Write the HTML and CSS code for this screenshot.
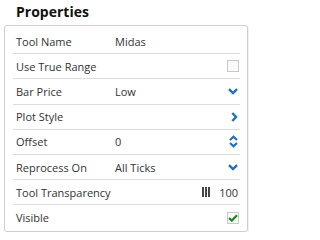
FILE: index.html
```html
<!DOCTYPE html>
<html>
<head>
<meta charset="utf-8">
<link rel="stylesheet" href="styles.css">
</head>
<body>
<h1 class="title">Properties</h1>
<div class="panel">
  <div class="row"><span class="label">Tool Name</span><span class="value">Midas</span><span class="ctl"></span></div>
  <div class="row"><span class="label">Use True Range</span><span class="value"></span><span class="ctl"><span class="check"></span></span></div>
  <div class="row"><span class="label">Bar Price</span><span class="value">Low</span><span class="ctl">
    <svg class="icon" width="10" height="7" viewBox="0 0 10 7"><path d="M1 1.2 L5 5 L9 1.2" fill="none" stroke="#1f6fbf" stroke-width="2.4" stroke-linejoin="miter"/></svg></span></div>
  <div class="row"><span class="label">Plot Style</span><span class="value"></span><span class="ctl">
    <svg class="icon" width="7" height="10" viewBox="0 0 7 10"><path d="M1.3 1 L5 5 L1.3 9" fill="none" stroke="#1f6fbf" stroke-width="2.4"/></svg></span></div>
  <div class="row"><span class="label">Offset</span><span class="value">0</span><span class="ctl">
    <svg class="icon" width="9" height="13" viewBox="0 0 9 13"><path d="M1 5 L4.5 1.8 L8 5 M1 8 L4.5 11.2 L8 8" fill="none" stroke="#1f6fbf" stroke-width="2.2"/></svg></span></div>
  <div class="row"><span class="label">Reprocess On</span><span class="value">All Ticks</span><span class="ctl">
    <svg class="icon" width="10" height="7" viewBox="0 0 10 7"><path d="M1 1.2 L5 5 L9 1.2" fill="none" stroke="#1f6fbf" stroke-width="2.4"/></svg></span></div>
  <div class="row"><span class="label">Tool Transparency</span><span class="value"></span><span class="ctl trans"><span class="bars"><i></i><i></i><i></i></span><span class="num">100</span></span></div>
  <div class="row"><span class="label">Visible</span><span class="value"></span><span class="ctl"><span class="check">
    <svg width="10" height="8" viewBox="0 0 10 8"><path d="M1 4 L3.8 6.6 L9 1.2" fill="none" stroke="#1a8a1a" stroke-width="2.2"/></svg></span></span></div>
</div>
</body>
</html>
```
FILE: styles.css
```css
html, body {
  margin: 0;
  padding: 0;
  background: #ffffff;
}
body {
  width: 251px;
  font-family: "Open Sans", "Noto Sans", sans-serif;
  color: #333333;
}
.title {
  margin: 0;
  padding: 0 0 0 16px;
  height: 25px;
  font-size: 14px;
  font-weight: 700;
  line-height: 24px;
  color: #111111;
}
.panel {
  margin: 0 3px 0 4px;
  border: 1px solid #cfcfcf;
  border-radius: 3px;
  padding: 3px 7px 0 8px;
  box-sizing: border-box;
  box-shadow: 1px 1px 1px rgba(0,0,0,0.06);
}
.row {
  display: grid;
  grid-template-columns: 99px 1fr auto;
  align-items: center;
  height: 25.2px;
  box-sizing: border-box;
  padding: 0 2px 0 3px;
  border-bottom: 1px solid #dcdcdc;
  font-size: 11px;
  line-height: 15px;
}
.row:last-child {
  border-bottom: none;
}
.label, .value {
  white-space: nowrap;
}
.ctl {
  display: flex;
  align-items: center;
  justify-content: flex-end;
}
.icon {
  display: block;
}
.check {
  display: flex;
  align-items: center;
  justify-content: center;
  width: 12px;
  height: 12px;
  box-sizing: border-box;
  border: 1px solid #c8c8c8;
  background: #fafafa;
  margin-right: -1px;
}
.check svg {
  display: block;
}
.trans {
  gap: 9px;
}
.bars {
  display: flex;
  gap: 1px;
}
.bars i {
  display: block;
  width: 2px;
  height: 10px;
  background: #444444;
}
.num {
  color: #333333;
}
```
